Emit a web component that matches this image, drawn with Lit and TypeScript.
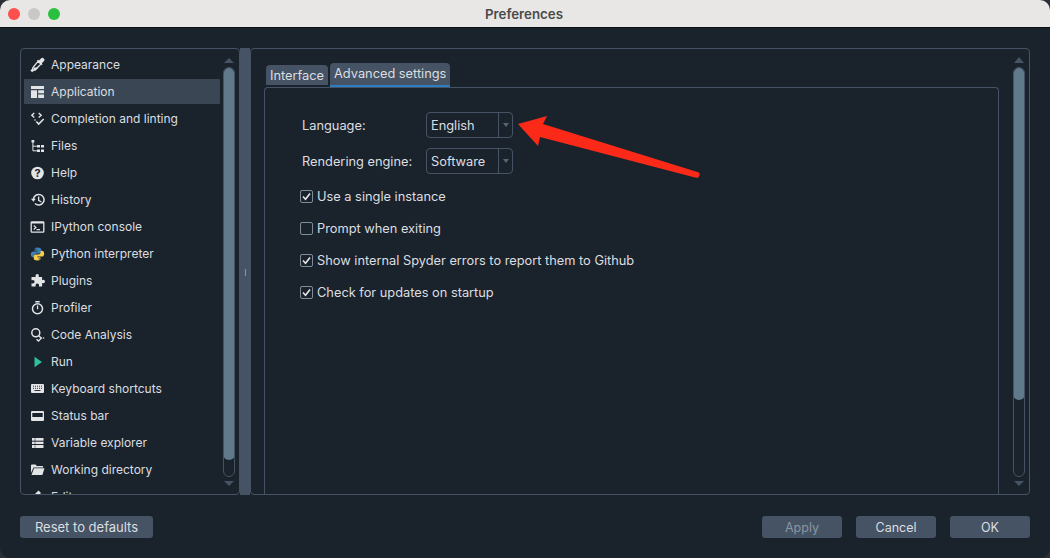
import { LitElement, html, css, svg } from "lit";
import { customElement } from "lit/decorators.js";

const F = "#e2e4e5";
const icons: Record<string, unknown> = {
  Appearance: svg`<path d="M8.200 4.200 11 7 5.200 12.800 3.400 13.200 2.200 14.400 1.300 13.500 2.500 12.300 2.900 10.500z" fill="none" stroke="${F}" stroke-width="1.300"/><path d="M3.500 10.500h5l-3 3h-2z" fill="${F}"/><path d="M7 3.700 8 2.700 9 3.400 11 1.400a1.900 1.900 0 0 1 2.800 2.800L11.800 6.200 12.500 7.200 11.500 8.200z" fill="${F}"/>`,
  Application: svg`<path d="M1 2h13v3H1zM1 6.200h6V14H1zM8.200 6.200H14v3H8.200zM8.200 10.600H14V14H8.200z" fill="${F}"/>`,
  "Completion and linting": svg`<path d="M4.300 2 1.800 4.300l2.500 2.300M8.700 2l2.500 2.300-2.500 2.300" fill="none" stroke="${F}" stroke-width="1.400"/><path d="m6.300 10.500 2.400 2.500 5-5" fill="none" stroke="${F}" stroke-width="1.600"/><circle cx="5" cy="9" r=".8" fill="${F}"/>`,
  Files: svg`<path d="M1.500 2h2.800v2.600H1.500zM7 7h3v2.400H7zM11 7h3v2.400h-3zM7 11.500h3V14H7zM11 11.500h3V14h-3z" fill="${F}"/><path d="M2.900 4v8.800h4M2.900 8.200h4" stroke="${F}" fill="none"/>`,
  Help: svg`<circle cx="7.500" cy="8" r="6.300" fill="${F}"/><text x="7.500" y="12" text-anchor="middle" font-size="11" font-weight="700" font-family="Inter" fill="#19232d">?</text>`,
  History: svg`<path d="M3.400 7.500a5.300 5.300 0 1 1 1.600 4" fill="none" stroke="${F}" stroke-width="1.500"/><path d="M1 6.800h4.800L3.400 9.800zM8 4.500h1.300v3.600l2.400 1.400-.6 1L8 8.800z" fill="${F}"/>`,
  "IPython console": svg`<path d="M2 2.800h11a.8.8 0 0 1 .8.8v8.800a.8.8 0 0 1-.8.800H2a.8.800 0 0 1-.8-.8V3.600a.8.800 0 0 1 .8-.8z" fill="none" stroke="${F}" stroke-width="1.300"/><path d="M1.200 3h12.600v1.600H1.200z" fill="${F}"/><path d="m3.700 6.500 2.300 2-2.300 2" fill="none" stroke="${F}" stroke-width="1.200"/><path d="M6.500 10.700h3.500" stroke="${F}" stroke-width="1.200"/>`,
  "Python interpreter": svg`<path d="M7.300 1.500C4.700 1.500 4.600 2.600 4.600 3.500v1.300h3v.6H3.200C1.800 5.400.8 6.500.8 8.300c0 1.800.9 3 2.300 3h1.200V9.700c0-1.200 1-2.200 2.300-2.200h2.800c1 0 1.800-.8 1.800-1.900V3.500c0-1.100-1.100-2-3.900-2zM5.800 2.400a.6.6 0 1 1 0 1.300.6.6 0 0 1 0-1.300z" fill="#3f7fb5" fill-rule="evenodd"/><path d="M7.700 14.500c2.600 0 2.700-1.100 2.700-2v-1.300h-3v-.6h4.400c1.400 0 2.400-1.100 2.400-2.900 0-1.800-.9-3-2.300-3h-1.200v1.600c0 1.200-1 2.200-2.300 2.200H5.600c-1 0-1.800.8-1.800 1.900v2.100c0 1.100 1.100 2 3.900 2zm1.500-.9a.6.6 0 1 1 0-1.300.6.6 0 0 1 0 1.300z" fill="#f5cf4b" fill-rule="evenodd"/>`,
  Plugins: svg`<path d="M5.500 2.800a1.700 1.700 0 0 1 3.400 0c0 .6-.3.900-.3 1.300h3.500v3c.5 0 .8-.3 1.200-.3a1.700 1.700 0 0 1 0 3.400c-.4 0-.7-.3-1.200-.3v3.700H8.800c0-.5.3-.8.300-1.200a1.800 1.800 0 0 0-3.600 0c0 .4.300.7.300 1.200H1.500v-3.300c.5 0 .8.300 1.300.3a1.800 1.800 0 0 0 0-3.600c-.5 0-.8.300-1.300.3V4.100h4.300c0-.4-.3-.7-.3-1.300z" fill="${F}"/>`,
  Profiler: svg`<circle cx="7.500" cy="8.800" r="5" fill="none" stroke="${F}" stroke-width="1.500"/><path d="M5.300 1h4.400v1.400H5.300zM6.900 5.500h1.300v3.800H6.900z" fill="${F}"/>`,
  "Code Analysis": svg`<circle cx="5.800" cy="5.800" r="4" fill="none" stroke="${F}" stroke-width="1.500"/><path d="m8.800 8.800 2 2M6.500 12.300l2 1.800 3.300-3.600" fill="none" stroke="${F}" stroke-width="1.400"/><circle cx="13.500" cy="11" r=".8" fill="${F}"/>`,
  Run: svg`<path d="M4.500 2.800 12 8l-7.500 5.200z" fill="#2fbf9a"/>`,
  "Keyboard shortcuts": svg`<path d="M2 3h11a1 1 0 0 1 1 1v7a1 1 0 0 1-1 1H2a1 1 0 0 1-1-1V4a1 1 0 0 1 1-1z" fill="${F}"/><path d="M3 5.200h9M3 7.300h9" stroke="#19232d" stroke-width=".9" stroke-dasharray="1 1"/><path d="M4.500 9.500h6" stroke="#19232d" stroke-width=".9"/>`,
  "Status bar": svg`<path d="M2 3h11a1 1 0 0 1 1 1v8a1 1 0 0 1-1 1H2a1 1 0 0 1-1-1V4a1 1 0 0 1 1-1z" fill="${F}"/><path d="M2.300 5h10.400v4H2.300z" fill="#19232d"/>`,
  "Variable explorer": svg`<path d="M2 3h11.500v10H2z" fill="${F}"/><path d="M1.500 6.200h12.500M1.500 9.500h12.500" stroke="#19232d"/><path d="M5 3v10" stroke="#19232d" stroke-width=".5"/>`,
  "Working directory": svg`<path d="M1 3.500a1 1 0 0 1 1-1h3.500l1.300 1.400h5.400a1 1 0 0 1 1 1v.7H3.500L1 11z" fill="${F}"/><path d="M4 6.300h10.500L12.400 13H1.500z" fill="${F}"/>`,
  Editor: svg`<path d="m8.500 1.500 2.500 2.500-7 7H1.500V8.500z" fill="${F}"/>`,
};

const names = [
  "Appearance", "Application", "Completion and linting", "Files", "Help", "History",
  "IPython console", "Python interpreter", "Plugins", "Profiler", "Code Analysis", "Run",
  "Keyboard shortcuts", "Status bar", "Variable explorer", "Working directory", "Editor",
];

@customElement("app-root")
export class AppRoot extends LitElement {
  static styles = css`
    :host { display: block; width: 1050px; height: 558px; background: #2a2f35; overflow: hidden; font-family: Inter, "Liberation Sans", sans-serif; font-size: 12.500px; color: #dcdee0; }
    * { box-sizing: border-box; }
    .win { position: relative; height: 558px; display: flex; flex-direction: column; background: #1a232c; border-radius: 10px; overflow: hidden; }
    .title { flex: 0 0 28px; background: #e8e7e6; border-bottom: 1px solid #0c1116; display: flex; align-items: center; justify-content: center; position: relative; color: #4a4a4a; font-weight: 600; font-size: 13.300px; padding-right: 2px; }
    .lights { position: absolute; left: 8px; top: 8px; display: flex; gap: 8px; }
    .lights i { width: 12px; height: 12px; border-radius: 50%; }
    .body { flex: 1; display: flex; flex-direction: column; padding: 20px 20px 0; }
    .main { display: flex; height: 447px; }
    .left { width: 220px; border: 1px solid #455364; border-radius: 4px; display: flex; overflow: hidden; padding: 2px 4px 0 3px; position: relative; }
    .list { width: 196px; flex: none; overflow: hidden; height: 443px; font-size: 12px; }
    .row { height: 27px; display: flex; align-items: center; gap: 6px; padding-left: 6px; }
    .row.sel { background: #3b4654; border-radius: 1px; height: 25px; margin: 1px 0; }
    .row svg { width: 15px; height: 16px; flex: none; }
    .split { width: 10px; background: #455364; display: flex; align-items: center; justify-content: center; }
    .split i { width: 1px; height: 7px; background: #8a98a8; margin-top: 2px; }
    .right { flex: 1; border: 1px solid #455364; border-radius: 4px; display: flex; padding: 0 4px 0 13px; position: relative; }
    .content { width: 735px; flex: none; display: flex; flex-direction: column; padding-top: 14px; font-size: 12.800px; }
    .tabs { display: flex; align-items: flex-end; gap: 2px; padding-left: 2px; height: 24px; }
    .tab { background: #455364; border-radius: 4px 4px 0 0; height: 20px; padding: 0 4px; display: flex; align-items: center; margin-bottom: 2px; }
    .tab.on { height: 24px; border-bottom: 2px solid #2f7fc0; margin-bottom: 0; padding-bottom: 1px; }
    .pane { flex: 1; border: 1px solid #455364; border-bottom: 0; border-radius: 4px 4px 0 0; padding: 24px 37px; }
    .frow { display: flex; align-items: center; height: 26px; margin-bottom: 10px; }
    .frow label { width: 124px; }
    .combo { width: 87px; height: 26px; border: 1px solid #455364; border-radius: 4px; display: flex; align-items: center; padding-left: 4px; position: relative; }
    .combo span { flex: 1; }
    .drop { width: 14px; height: 24px; border-left: 1px solid #455364; display: flex; align-items: center; justify-content: center; }
    .drop::after { content: ""; border: 3.500px solid transparent; border-top: 4px solid #566678; border-bottom: 0; }
    .checks { display: flex; flex-direction: column; gap: 14px; margin-left: -2px; margin-top: 13px; }
    .chk { display: flex; align-items: center; gap: 4px; height: 18px; }
    .box { width: 13px; height: 13px; border: 1px solid #7f8b98; border-radius: 2px; display: flex; align-items: center; justify-content: center; }
    .box svg { width: 11px; height: 11px; }
    .sb { width: 12px; flex: none; margin-left: auto; display: flex; flex-direction: column; align-items: center; padding-top: 8px; }
    .left .sb { margin-left: 3px; padding-top: 7px; }
    .up { border: 5px solid transparent; border-bottom: 6px solid #455364; border-top: 0; margin-bottom: 4px; width: 0; }
    .left .up { border-bottom-width: 5px; }
    .dn { border: 5px solid transparent; border-top: 5px solid #455364; border-bottom: 0; margin-top: 4px; width: 0; }
    .track { width: 12px; height: 410px; border: 1px solid #455364; border-radius: 6px; overflow: hidden; }
    .thumb { margin: -1px; background: #60798b; border-radius: 6px; }
    .foot { display: flex; justify-content: space-between; margin-top: 21px; }
    .btn { height: 22px; background: #455364; border-radius: 3px; display: flex; align-items: center; justify-content: center; }
    .btn.reset { width: 133px; font-size: 13px; }
    .btn.act { width: 80px; }
    .btn.dis { color: #8995a2; }
    .acts { display: flex; gap: 14px; }
    .arrow { position: absolute; left: 0; top: 0; pointer-events: none; }
  `;

  sb(h: number) {
    return html`<div class="sb"><div class="up"></div><div class="track"><div class="thumb" style="height:${h}px"></div></div><div class="dn"></div></div>`;
  }

  render() {
    const checks = [
      [true, "Use a single instance"], [false, "Prompt when exiting"],
      [true, "Show internal Spyder errors to report them to Github"], [true, "Check for updates on startup"],
    ] as [boolean, string][];
    return html`<div class="win">
      <div class="title">
        <div class="lights"><i style="background:#fd4f4b"></i><i style="background:#c9c8c7"></i><i style="background:#2ac03f"></i></div>
        Preferences
      </div>
      <div class="body">
        <div class="main">
          <div class="left">
            <div class="list">
              ${names.map(n => html`<div class="row ${n === "Application" ? "sel" : ""}"><svg viewBox="0 0 15 16">${icons[n]}</svg>${n}</div>`)}
            </div>
            ${this.sb(393)}
          </div>
          <div class="split"><i></i></div>
          <div class="right">
            <div class="content">
              <div class="tabs"><div class="tab">Interface</div><div class="tab on">Advanced settings</div></div>
              <div class="pane">
                <div class="frow"><label>Language:</label><div class="combo"><span>English</span><div class="drop"></div></div></div>
                <div class="frow"><label>Rendering engine:</label><div class="combo"><span>Software</span><div class="drop"></div></div></div>
                <div class="checks">
                  ${checks.map(([c, t]) => html`<div class="chk"><div class="box">${c ? html`<svg viewBox="0 0 11 11"><path d="m2 5.500 2.500 2.700L9 2.500" fill="none" stroke="#e4e6e8" stroke-width="1.600"/></svg>` : ""}</div>${t}</div>`)}
                </div>
              </div>
            </div>
            ${this.sb(333)}
          </div>
        </div>
        <div class="foot">
          <div class="btn reset">Reset to defaults</div>
          <div class="acts"><div class="btn act dis">Apply</div><div class="btn act">Cancel</div><div class="btn act">OK</div></div>
        </div>
      </div>
      <svg class="arrow" width="1050" height="558"><path d="M518 124 547 116 543 124 699 172.500Q701 176 697 178L540 137 538 146Z" fill="#fb2a18"/></svg>
    </div>`;
  }
}
